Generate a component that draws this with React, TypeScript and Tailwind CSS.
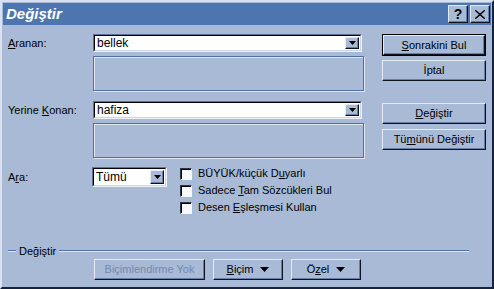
import React from "react";

const face = "bg-[#a8bad6]";

function Btn({
  children,
  def,
  disabled,
  className = "",
}: {
  children: React.ReactNode;
  def?: boolean;
  disabled?: boolean;
  className?: string;
}) {
  return (
    <div
      className={`${def ? "border border-black" : ""} ${className}`}
    >
      <div
        className={`flex h-full w-full items-center justify-center border border-t-[#e4ebf5] border-l-[#e4ebf5] border-r-[#0d1420] border-b-[#0d1420] ${face} shadow-[inset_-1px_-1px_0_#687ea3] ${
          disabled ? "text-[#7489af]" : "text-black"
        }`}
      >
        {children}
      </div>
    </div>
  );
}

function Arrow({ size = "small" }: { size?: "small" | "big" }) {
  return size === "small" ? (
    <svg width="7" height="4" viewBox="0 0 7 4">
      <path d="M0 0h7L3.5 4z" fill="#000" />
    </svg>
  ) : (
    <svg width="9" height="5" viewBox="0 0 9 5">
      <path d="M0 0h9L4.5 5z" fill="#000" />
    </svg>
  );
}

function Combo({ value, className = "" }: { value: string; className?: string }) {
  return (
    <div
      className={`flex border border-t-[#5d7296] border-l-[#5d7296] border-r-[#eef2f8] border-b-[#eef2f8] ${className}`}
    >
      <div className="flex flex-1 border border-t-black border-l-black border-r-[#c9d5e8] border-b-[#c9d5e8] bg-white">
        <div className="flex flex-1 items-center pl-[2px] text-[12px] leading-none">{value}</div>
        <Btn className="m-[1px] ml-0 w-[14px]">
          <Arrow />
        </Btn>
      </div>
    </div>
  );
}

function Box() {
  return (
    <div className="ml-[85px] mt-[4px] h-[35px] w-[271px] border border-[#4f6fa6] shadow-[inset_1px_1px_0_#dfe7f3,1px_1px_0_#dfe7f3]" />
  );
}

function Check({ children }: { children: React.ReactNode }) {
  return (
    <div className="flex h-[17px] items-center">
      <div className="h-[12px] w-[12px] border border-t-[#2a3548] border-l-[#2a3548] border-r-[#f4f7fb] border-b-[#f4f7fb] bg-[#f7f9fc] shadow-[inset_1px_1px_0_#000]" />
      <span className="ml-[6px]">{children}</span>
    </div>
  );
}

export default function App() {
  return (
    <div
      className={`h-[289px] w-[494px] overflow-hidden border-2 border-t-[#d9e2f0] border-l-[#d9e2f0] border-r-[#17233a] border-b-[#17233a] ${face} p-[1px] text-[11px] text-black`}
      style={{ fontFamily: '"Liberation Sans", Arial, sans-serif' }}
    >
      {/* title bar */}
      <div className="flex h-[22px] items-center bg-[#4d75af] pl-[3px] pr-[1px]">
        <span className="flex-1 text-[15px] font-bold italic text-white">Değiştir</span>
        <Btn className="h-[18px] w-[20px]">
          <span className="text-[14px] font-bold leading-none">?</span>
        </Btn>
        <Btn className="ml-[2px] h-[18px] w-[20px]">
          <svg width="10" height="9" viewBox="0 0 10 9">
            <path d="M1 0l4 3.5L9 0h1v1L6 4.5 10 8v1H9L5 5.5 1 9H0V8l4-3.5L0 1V0z" fill="#000" />
          </svg>
        </Btn>
      </div>

      {/* top block */}
      <div className="flex pl-[5px] pt-[9px]">
        <div className="flex w-[358px] flex-col">
          <div className="flex items-center">
            <span className="w-[85px]">
              <u>A</u>ranan:
            </span>
            <Combo value="bellek" className="h-[18px] w-[269px]" />
          </div>
          <Box />
          <div className="mt-[10px] flex items-center">
            <span className="w-[85px]">
              Yerine <u>K</u>onan:
            </span>
            <Combo value="hafiza" className="h-[18px] w-[269px]" />
          </div>
          <Box />
        </div>
        <div className="ml-[16px] flex flex-col">
          <Btn def className="h-[22px] w-[104px]">
            <span>
              <u>S</u>onrakini Bul
            </span>
          </Btn>
          <Btn className="mt-[4px] h-[21px] w-[104px]">İptal</Btn>
          <Btn className="mt-[22px] h-[21px] w-[104px]">
            <span>
              <u>D</u>eğiştir
            </span>
          </Btn>
          <Btn className="mt-[5px] h-[21px] w-[104px]">
            <span>
              Tü<u>m</u>ünü Değiştir
            </span>
          </Btn>
        </div>
      </div>

      {/* Ara row */}
      <div className="mt-[9px] flex pl-[5px]">
        <div className="flex h-[20px] items-center">
          <span className="w-[84px]">
            A<u>r</u>a:
          </span>
          <Combo value="Tümü" className="h-[20px] w-[75px]" />
        </div>
        <div className="-mt-[2px] ml-[13px] flex flex-col">
          <Check>
            BÜYÜK/küçük D<u>u</u>yarlı
          </Check>
          <Check>
            Sadece <u>T</u>am Sözcükleri Bul
          </Check>
          <Check>
            Desen <u>E</u>şleşmesi Kullan
          </Check>
        </div>
      </div>

      {/* group */}
      <div className="mt-[29px] flex h-[12px] items-center pl-[5px]">
        <div className="h-[2px] w-[8px] border-t border-t-[#4f6fa6] border-b border-b-[#dfe7f3]" />
        <span className="px-[3px]">Değiştir</span>
        <div className="h-[2px] w-[410px] border-t border-t-[#4f6fa6] border-b border-b-[#dfe7f3]" />
      </div>
      <div className="mt-[2px] flex pl-[91px]">
        <Btn disabled className="h-[21px] w-[111px]">
          Biçimlendirme Yok
        </Btn>
        <Btn className="ml-[8px] h-[21px] w-[70px]">
          <span className="mr-[7px]">
            <u>B</u>içim
          </span>
          <Arrow size="big" />
        </Btn>
        <Btn className="ml-[8px] h-[21px] w-[70px]">
          <span className="mr-[7px]">
            Ö<u>z</u>el
          </span>
          <Arrow size="big" />
        </Btn>
      </div>
    </div>
  );
}
